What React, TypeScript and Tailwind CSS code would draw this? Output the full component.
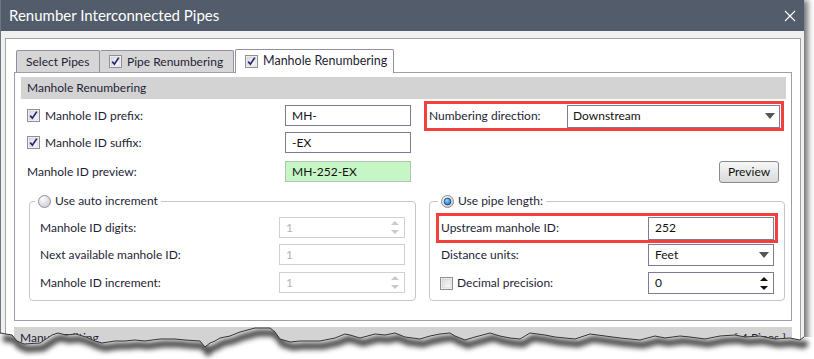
import type { ReactNode } from 'react'

// checkbox glyph, drawn like the classic Windows one
function Check({ checked = true }: { checked?: boolean }) {
  return (
    <svg width="13" height="13" viewBox="0 0 13 13" className="shrink-0">
      <defs>
        <linearGradient id="cbg" x1="0" y1="0" x2="1" y2="1">
          <stop offset="0" stopColor="#dcdcdc" />
          <stop offset="1" stopColor="#fbfbfb" />
        </linearGradient>
      </defs>
      <rect x="0.5" y="0.5" width="12" height="12" fill="#fff" stroke="#8e8f97" />
      <rect x="2" y="2" width="9" height="9" fill="url(#cbg)" stroke="#c4c4cc" strokeWidth="0.6" />
      {checked && <path d="M3.2 6.6 L5.4 9.2 L9.8 2.6" fill="none" stroke="#23237a" strokeWidth="1.7" />}
    </svg>
  )
}

function Radio({ on = false }: { on?: boolean }) {
  return (
    <svg width="13" height="13" viewBox="0 0 13 13" className="shrink-0">
      <defs>
        <radialGradient id="rg" cx="0.35" cy="0.3" r="0.8">
          <stop offset="0" stopColor="#fdfdfd" />
          <stop offset="1" stopColor="#c9c9cf" />
        </radialGradient>
        <radialGradient id="rb" cx="0.4" cy="0.35" r="0.7">
          <stop offset="0" stopColor="#8fd6ff" />
          <stop offset="1" stopColor="#1d6db5" />
        </radialGradient>
      </defs>
      <circle cx="6.5" cy="6.5" r="6" fill="url(#rg)" stroke="#8e8f97" />
      {on && <circle cx="6.5" cy="6.5" r="3.4" fill="url(#rb)" stroke="#1b3f6a" strokeWidth="0.8" />}
    </svg>
  )
}

function Caret() {
  return (
    <svg width="10" height="6" viewBox="0 0 10 6" className="shrink-0">
      <path d="M0 0 H10 L5 6 Z" fill="#555" />
    </svg>
  )
}

function Spin({ disabled = false }: { disabled?: boolean }) {
  const c = disabled ? '#c9c9cf' : '#111'
  return (
    <svg width="10" height="15" viewBox="0 0 10 15" className="shrink-0">
      <path d="M1 5 L5 1 L9 5 Z" fill={c} />
      <path d="M1 10 L5 14 L9 10 Z" fill={c} />
    </svg>
  )
}

function Field({
  children,
  right,
  h = 'h-[21px]',
  className = 'border-[#7c7c94] bg-white text-[#111]',
}: {
  children: ReactNode
  right?: ReactNode
  h?: string
  className?: string
}) {
  return (
    <div className={`flex w-[126px] shrink-0 items-center border pl-[6px] pr-[4px] ${h} ${className}`}>
      <span className="flex-1">{children}</span>
      {right}
    </div>
  )
}

const dis = 'border-[#cfcfd6] bg-white text-[#b4b4b4]'

export default function App() {
  return (
    <div className="relative h-[359px] w-[814px] overflow-hidden bg-white font-['Lato','Noto_Sans',sans-serif] text-[12px] text-[#1e1e36]">
      <div className="h-[359px] w-[804px] border-l border-[#6f7580] bg-[#f0f0f0] shadow-[4px_0_6px_rgba(0,0,0,0.55)]">
        {/* title bar */}
        <div className="flex h-[31px] items-center justify-between bg-[#525c6a] pl-[8px] pr-[8px] text-[15px] text-white">
          <span>Renumber Interconnected Pipes</span>
          <svg width="12" height="12" viewBox="0 0 12 12">
            <path d="M1 1 L11 11 M11 1 L1 11" stroke="#fff" strokeWidth="1.2" />
          </svg>
        </div>

        <div className="pl-[4px] pt-[7px]">
          <div className="h-[330px] w-[796px] border border-[#a3a3a3] bg-white">
            {/* tabs */}
            <div className="mt-[10px] flex h-[23px] items-end pl-[10px]">
              <div className="flex h-[22px] w-[84px] items-center rounded-t-[2px] border border-b-0 border-[#8f8fa6] bg-[#d6d6d6] pl-[9px]">
                Select Pipes
              </div>
              <div className="flex h-[22px] w-[134px] items-center gap-[5px] rounded-t-[2px] border border-b-0 border-l-0 border-[#8f8fa6] bg-[#d6d6d6] pl-[9px]">
                <Check />
                <span>Pipe Renumbering</span>
              </div>
              <div className="relative z-10 mb-[-1px] ml-[1px] flex h-[24px] w-[159px] items-center gap-[5px] rounded-t-[2px] border border-b-0 border-[#8f8fa6] bg-white pl-[9px] text-[12.5px]">
                <Check />
                <span>Manhole Renumbering</span>
              </div>
            </div>

            {/* tab page */}
            <div className="ml-[8px] h-[249px] w-[778px] border border-[#9d9db0]">
              <div className="ml-[6px] mt-[4px] flex h-[22px] w-[765px] items-center bg-[#d3d3d3] pl-[6px]">
                Manhole Renumbering
              </div>

              <div className="flex pl-[6px]">
                {/* left column */}
                <div className="w-[395px]">
                  <div className="mt-[6px] flex h-[21px] items-center pl-[6px] pr-[5px]">
                    <Check />
                    <span className="ml-[5px] flex-1">Manhole ID prefix:</span>
                    <Field>MH-</Field>
                  </div>
                  <div className="mt-[6px] flex h-[21px] items-center pl-[6px] pr-[5px]">
                    <Check />
                    <span className="ml-[5px] flex-1">Manhole ID suffix:</span>
                    <Field>-EX</Field>
                  </div>
                  <div className="mt-[8px] flex h-[21px] items-center pl-[6px] pr-[5px]">
                    <span className="flex-1">Manhole ID preview:</span>
                    <Field className="border-[#b3c4b3] bg-[#c6f6c6] text-[#111]">MH-252-EX</Field>
                  </div>

                  <fieldset className="ml-[8px] mt-[11px] w-[387px] rounded-[4px] border border-[#c6c6ce] px-0 pb-[7px]">
                    <legend className="ml-[5px] flex h-[16px] items-center gap-[4px] px-[3px]">
                      <Radio />
                      <span>Use auto increment</span>
                    </legend>
                    <div className="px-[10px]">
                      <div className="mt-[8px] flex h-[21px] items-center">
                        <span className="flex-1">Manhole ID digits:</span>
                        <Field className={dis} right={<Spin disabled />}>1</Field>
                      </div>
                      <div className="mt-[6px] flex h-[21px] items-center">
                        <span className="flex-1">Next available manhole ID:</span>
                        <Field className={dis}>1</Field>
                      </div>
                      <div className="mt-[7px] flex h-[21px] items-center">
                        <span className="flex-1">Manhole ID increment:</span>
                        <Field className={dis} right={<Spin disabled />}>1</Field>
                      </div>
                    </div>
                  </fieldset>
                </div>

                {/* right column */}
                <div className="ml-[8px] w-[361px]">
                  <div className="mt-[2px] flex h-[30px] w-[360px] items-center border-[3px] border-[#f2403f] pl-[2px] pr-[1px]">
                    <span className="flex-1">Numbering direction:</span>
                    <div className="flex h-[23px] w-[213px] items-center justify-between border border-[#7c7c94] pl-[5px] pr-[4px] text-[#111]">
                      <span>Downstream</span>
                      <Caret />
                    </div>
                  </div>

                  <div className="mt-[30px] flex justify-end pr-[6px]">
                    <button className="h-[22px] w-[60px] rounded-[3px] border border-[#8b8b8b] bg-gradient-to-b from-[#f7f7f7] to-[#dadada] text-[#111]">
                      Preview
                    </button>
                  </div>

                  <fieldset className="ml-[5px] mt-[10px] w-[356px] rounded-[4px] border border-[#c6c6ce] px-0 pb-[6px]">
                    <legend className="ml-[8px] flex h-[16px] items-center gap-[4px] px-[3px]">
                      <Radio on />
                      <span>Use pipe length:</span>
                    </legend>
                    <div className="mx-[6px] mt-[4px] flex h-[30px] items-center border-[3px] border-[#f2403f] pl-[2px] pr-[1px]">
                      <span className="flex-1">Upstream manhole ID:</span>
                      <Field h="h-[23px]">252</Field>
                    </div>
                    <div className="mt-[1px] flex h-[22px] items-center pl-[11px] pr-[10px]">
                      <span className="flex-1">Distance units:</span>
                      <Field h="h-[22px]" right={<Caret />}>Feet</Field>
                    </div>
                    <div className="mt-[6px] flex h-[22px] items-center pl-[10px] pr-[10px]">
                      <Check checked={false} />
                      <span className="ml-[4px] flex-1">Decimal precision:</span>
                      <Field h="h-[22px]" right={<Spin />}>0</Field>
                    </div>
                  </fieldset>
                </div>
              </div>
            </div>

            <div className="ml-[8px] mt-[6px] flex h-[22px] w-[778px] items-center justify-between bg-[#d3d3d3] px-[6px]">
              <span>Manual Editing</span>
              <span>[ 4 Pipes ]</span>
            </div>
          </div>
        </div>
      </div>

      {/* torn bottom edge */}
      <svg className="absolute left-0 top-[320px]" width="814" height="39" viewBox="0 320 814 39">
        <defs>
          <filter id="blur" x="-5%" y="-50%" width="110%" height="200%">
            <feGaussianBlur stdDeviation="2.5" />
          </filter>
          <clipPath id="below">
            <path d={`M0 333 ${TEAR} L814 337 L814 359 L0 359 Z`} />
          </clipPath>
        </defs>
        <path d={`M0 333 ${TEAR} L814 337 L814 359 L0 359 Z`} fill="#fff" />
        <g clipPath="url(#below)">
          <path d={`M0 333 ${TEAR}`} transform="translate(3 5)" fill="none" stroke="#000" strokeOpacity="0.7" strokeWidth="7" filter="url(#blur)" />
        </g>
        <path d={`M0 333 ${TEAR}`} fill="none" stroke="#333" strokeWidth="1" />
      </svg>
    </div>
  )
}

const TEAR =
  'L12 335 L17 341 L24 344 L40 343 L46 339 L52 335 L58 333 L66 335 L76 334 L86 337 L95 341 L102 343 L115 341 L125 341 L135 340 L145 341 L160 339 L175 339 L185 340 L200 341 L205 347 L210 343 L215 341 L220 338 L230 336 L240 332 L255 328 L270 328 L275 332 L280 339 L290 342 L300 341 L320 341 L335 338 L345 334 L350 335 L360 338 L375 334 L385 335 L395 333 L405 337 L420 339 L430 336 L440 334 L450 333 L455 336 L465 340 L475 337 L490 333 L500 336 L510 338 L520 339 L530 333 L545 335 L555 337 L565 338 L575 339 L590 334 L605 336 L620 338 L640 340 L655 336 L665 338 L680 336 L690 337 L705 339 L720 336 L735 335 L745 337 L760 336 L775 339 L790 338 L800 340 L804 337'
